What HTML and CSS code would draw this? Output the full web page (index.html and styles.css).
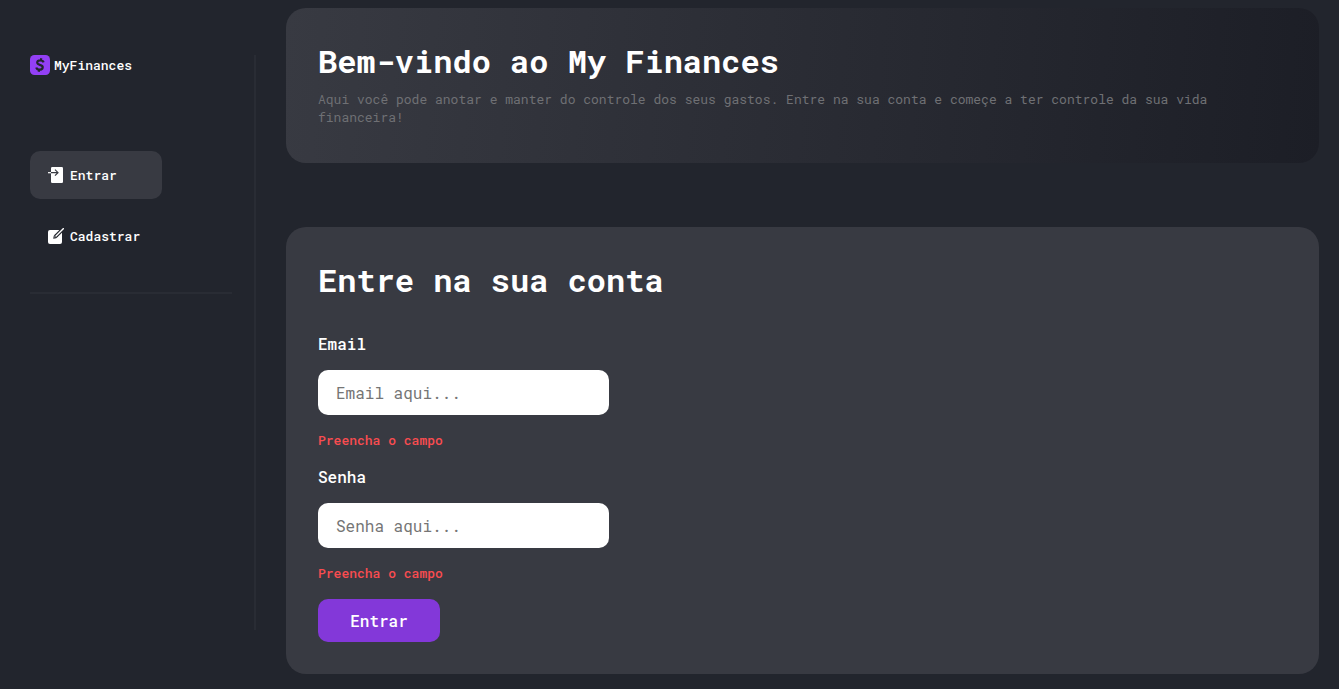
FILE: index.html
```html
<!DOCTYPE html>
<html lang="pt-BR">
<head>
<meta charset="utf-8">
<meta name="viewport" content="width=device-width, initial-scale=1">
<title>MyFinances</title>
<link rel="stylesheet" href="styles.css">
</head>
<body>
<div class="layout">
  <aside class="sidebar">
    <div class="brand">
      <svg class="brand-icon" viewBox="0 0 20 20" aria-hidden="true">
        <rect width="20" height="20" rx="4.500" fill="#9340f5"/>
        <path d="M13.600 7.400C13.200 6 12.100 5.300 10.500 5.300 8.700 5.300 7.300 6.100 7.200 7.500 7.200 8.900 8.500 9.400 10 9.900 11.700 10.400 12.900 11 12.700 12.500 12.500 13.900 11.100 14.700 9.500 14.700 7.700 14.700 6.600 13.900 6.300 12.500M11.300 3.200 10.900 5.300M9.100 14.700 8.700 16.800" fill="none" stroke="#22252d" stroke-width="2.200"/>
      </svg>
      <span>MyFinances</span>
    </div>
    <nav class="menu">
      <a class="menu-link active" href="#entrar">
        <svg class="menu-icon" viewBox="0 0 16 16" aria-hidden="true">
          <rect x="3" width="12" height="16" rx="1.200" fill="#fff"/>
          <path d="M0 5.700H3" stroke="#fff" stroke-width="1.200"/>
          <path d="M3 5.700H10M7 2.700 10 5.700 7 8.700" fill="none" stroke="#383a42" stroke-width="1.200"/>
        </svg>
        <span>Entrar</span>
      </a>
      <a class="menu-link" href="#cadastrar">
        <svg class="menu-icon" viewBox="0 0 16 16" aria-hidden="true">
          <rect y="2" width="14" height="14" rx="2" fill="#fff"/>
          <path d="M16 0 8 8" stroke="#22252d" stroke-width="3.800"/>
          <path d="M5.200 10.800 5.800 7.800 7.400 6 10 8.600 8.200 10.200Z" fill="#22252d"/>
          <path d="M15.800 .2 7.800 8.200" stroke="#fff" stroke-width="1.400"/>
          <path d="M6.400 9.600 6.900 8.100 7.900 9.100Z" fill="#fff"/>
        </svg>
        <span>Cadastrar</span>
      </a>
    </nav>
    <hr class="divider">
  </aside>
  <main class="content">
    <section class="banner">
      <h1 class="title">Bem-vindo ao My Finances</h1>
      <p class="intro">Aqui você pode anotar e manter do controle dos seus gastos. Entre na sua conta e começe a ter controle da sua vida financeira!</p>
    </section>
    <section class="card">
      <h2 class="title">Entre na sua conta</h2>
      <form class="form" novalidate>
        <label class="label" for="email">Email</label>
        <input class="field" id="email" type="email" placeholder="Email aqui..." aria-describedby="email-error">
        <p class="error" id="email-error">Preencha o campo</p>
        <label class="label" for="senha">Senha</label>
        <input class="field" id="senha" type="password" placeholder="Senha aqui..." aria-describedby="senha-error">
        <p class="error" id="senha-error">Preencha o campo</p>
        <button class="submit" type="submit">Entrar</button>
      </form>
    </section>
  </main>
</div>
</body>
</html>
```

FILE: styles.css
```css
* { box-sizing: border-box; margin: 0; }

body {
  background: #22252d;
  color: #fff;
  font-family: "Roboto Mono", "DejaVu Sans Mono", "Liberation Mono", monospace;
  font-size: 13px;
}

.layout {
  display: grid;
  grid-template-columns: 226px minmax(0, 1fr);
  gap: 30px;
  padding: 8px 20px 15px 30px;
}

.sidebar {
  margin: 47px 0 44px;
  padding-right: 22px;
  border-right: 2px solid #292c34;
}

.brand {
  display: flex;
  align-items: center;
  gap: 4px;
  height: 20px;
  font-weight: 500;
}
.brand-icon { width: 20px; height: 20px; }

.menu {
  display: flex;
  flex-direction: column;
  align-items: flex-start;
  gap: 13px;
  margin-top: 76px;
}
.menu-link {
  display: flex;
  align-items: center;
  gap: 6px;
  min-width: 132px;
  height: 48px;
  padding: 0 18px;
  border-radius: 10px;
  color: #fff;
  font-weight: 500;
  text-decoration: none;
}
.menu-link.active { background: #383a42; }
.menu-icon { width: 16px; height: 16px; flex: none; }

.divider {
  height: 2px;
  margin-top: 32px;
  border: 0;
  background: #292c34;
}

.content {
  display: flex;
  flex-direction: column;
  gap: 64px;
}
.banner,
.card { padding: 32px; border-radius: 20px; }
.banner {
  padding-bottom: 37px;
  background: linear-gradient(95deg, #383a42, #1c1e26);
}
.card { background: #383a42; }

.title { font-size: 32px; line-height: 42px; font-weight: 700; }
.intro { margin-top: 8px; line-height: 18px; color: #6f7074; }

.form {
  display: flex;
  flex-direction: column;
  align-items: flex-start;
  gap: 16px;
  margin-top: 32px;
}
.label { font-size: 16px; line-height: 21px; font-weight: 500; }
.field {
  width: 291px;
  max-width: 100%;
  height: 45px;
  padding: 0 18px;
  border: 0;
  border-radius: 10px;
  background: #fff;
  color: #22252d;
  font: inherit;
  font-size: 16px;
}
.field::placeholder { color: #757575; opacity: 1; }
.error { line-height: 19px; font-weight: 500; color: #f94c50; }
.submit {
  min-width: 122px;
  height: 43px;
  padding: 0 30px;
  border: 0;
  border-radius: 10px;
  background: #8338d9;
  color: #fff;
  font: inherit;
  font-size: 16px;
  font-weight: 500;
}
```
